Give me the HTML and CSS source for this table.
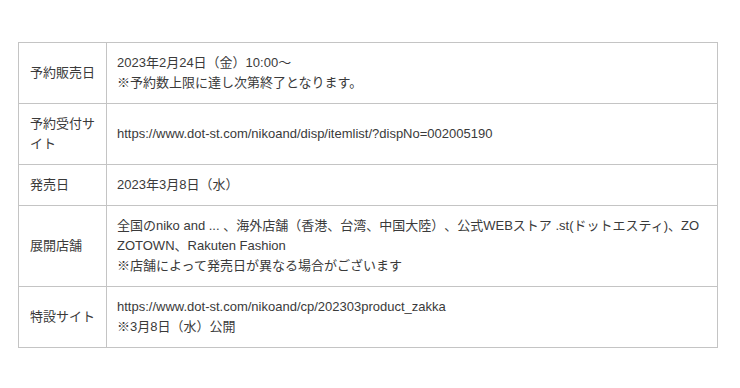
FILE: index.html
```html
<!DOCTYPE html>
<html lang="ja">
<head>
<meta charset="utf-8">
<link rel="stylesheet" href="styles.css">
</head>
<body>
<div class="wrap">
<table class="info">
<tr><th>予約販売日</th><td>2023年2月24日（金）10:00～<br>※予約数上限に達し次第終了となります。</td></tr>
<tr><th>予約受付サイト</th><td>https://www.dot-st.com/nikoand/disp/itemlist/?dispNo=002005190</td></tr>
<tr><th>発売日</th><td>2023年3月8日（水）</td></tr>
<tr><th>展開店舗</th><td>全国のniko and ... 、海外店舗（香港、台湾、中国大陸）、公式WEBストア .st(ドットエスティ)、ZOZOTOWN、Rakuten Fashion<br>※店舗によって発売日が異なる場合がございます</td></tr>
<tr><th>特設サイト</th><td>https://www.dot-st.com/nikoand/cp/202303product_zakka<br>※3月8日（水）公開</td></tr>
</table>
</div>
</body>
</html>
```
FILE: styles.css
```css
html, body { margin: 0; padding: 0; background: #fff; }
.wrap { padding: 42px 22px 0 18px; }
.info {
  width: 700px;
  border-collapse: collapse;
  font-family: "Liberation Sans", "Noto Sans CJK JP", sans-serif;
  font-size: 13px;
  line-height: 20px;
  color: #3a3a3a;
  text-spacing-trim: space-all;
}
.info th, .info td {
  border: 1px solid #c4c4c4;
  padding: 10px 10px;
  text-align: left;
  vertical-align: middle;
  font-weight: normal;
  word-break: break-all;
}
.info th { width: 66px; padding-left: 11px; }
```
